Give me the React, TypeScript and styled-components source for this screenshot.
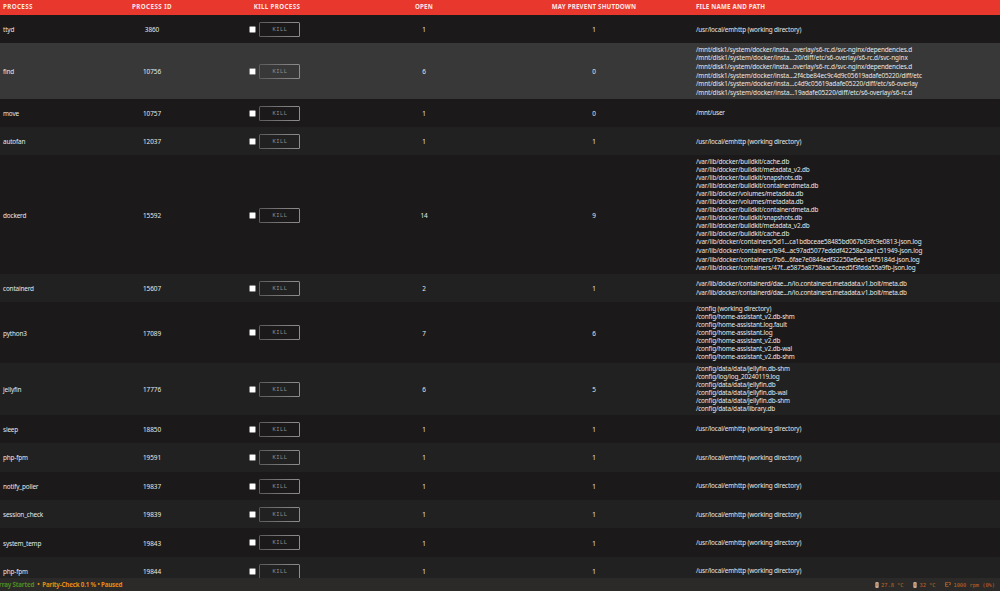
import React from "react";
import styled, { createGlobalStyle } from "styled-components";

const Global = createGlobalStyle`
  html, body { margin: 0; padding: 0; background: #1b1919; }
  body { overflow: hidden; }
`;

const Page = styled.div`
  width: 1000px;
  height: 591px;
  display: flex;
  flex-direction: column;
  overflow: hidden;
  background: #1b1919;
  color: #e8e8e8;
  font-family: "Noto Sans", sans-serif;
  font-size: 6.4px;
  letter-spacing: -0.16px;
`;

const columns = "103px 92px 158px 136px 204px 1fr";

const HeaderRow = styled.div`
  flex: none;
  box-sizing: border-box;
  height: 15px;
  display: grid;
  grid-template-columns: ${columns};
  align-items: center;
  padding: 0 3px 1px;
  background: #e8382d;
  color: #fde6e3;
  font-size: 6.2px;
  font-weight: 700;
  line-height: 8px;
  white-space: nowrap;
`;

const HeaderCell = styled.div<{ $center?: boolean; $spacing: number }>`
  text-align: ${(p) => (p.$center ? "center" : "left")};
  letter-spacing: ${(p) => p.$spacing}px;
`;

const Table = styled.div`
  flex: 1;
  min-height: 0;
  overflow: hidden;
`;

const Row = styled.div<{ $height: number; $bg: string }>`
  height: ${(p) => p.$height}px;
  display: grid;
  grid-template-columns: ${columns};
  align-items: center;
  padding: 0 3px;
  box-sizing: border-box;
  background: ${(p) => p.$bg};
  white-space: nowrap;
`;

const Cell = styled.div`
  padding-top: 1px;
`;

const NumberCell = styled(Cell)`
  text-align: center;
  letter-spacing: -0.06px;
`;

const KillCell = styled.div`
  display: flex;
  align-items: center;
  gap: 3px;
  padding: 0.6px 0 0 51px;
`;

const Check = styled.span`
  width: 7px;
  height: 7px;
  background: #fff;
  border: 1px solid #8a8989;
  border-radius: 1.5px;
  box-sizing: border-box;
`;

const KillButton = styled.button`
  width: 41px;
  height: 15px;
  padding: 0 0 0 1px;
  border: 0;
  border-radius: 1.5px;
  background:
    linear-gradient(90deg, #5c5a5a, #8f8d8d) top / 100% 1px no-repeat,
    linear-gradient(90deg, #5c5a5a, #8f8d8d) bottom / 100% 1px no-repeat,
    linear-gradient(#5c5a5a, #5c5a5a) left / 1px 100% no-repeat,
    linear-gradient(#8f8d8d, #8f8d8d) right / 1px 100% no-repeat;
  color: #8f8d8d;
  font: 5.4px/13px "DejaVu Sans Mono", monospace;
  letter-spacing: 0.5px;
  text-align: center;
`;

const Path = styled.div<{ $tall: boolean; $spacing: number }>`
  line-height: ${(p) => (p.$tall ? 8.55 : 8.06)}px;
  letter-spacing: ${(p) => p.$spacing}px;
`;

const Footer = styled.footer`
  flex: none;
  box-sizing: border-box;
  height: 13px;
  display: flex;
  align-items: center;
  justify-content: space-between;
  padding: 0 5px 0 0;
  background: #2b2a29;
  white-space: nowrap;
`;

const Status = styled.div`
  display: flex;
  gap: 3px;
  margin-left: -5px;
  color: #e68a12;
  font-size: 6.2px;
  font-weight: 700;
  letter-spacing: -0.17px;
`;

const Started = styled.span`
  color: #4f8a22;
`;

const Sensors = styled.div`
  display: flex;
  gap: 10px;
  color: #c4641f;
  font: 5.4px/8px "DejaVu Sans Mono", monospace;
  letter-spacing: -0.05px;
`;

const Sensor = styled.span`
  display: flex;
  align-items: center;
  gap: 2px;
`;

const dir = "/usr/local/emhttp (working directory)";

type PathEntry = string | [text: string, spacing: number];

type Process = {
  name: string;
  pid: number;
  open: number;
  prevent: number;
  height: number;
  paths: PathEntry[];
  hover?: boolean;
};

const processes: Process[] = [
  { name: "ttyd", pid: 3860, open: 1, prevent: 1, height: 28.4, paths: [dir] },
  {
    name: "find", pid: 10756, open: 6, prevent: 0, height: 55.3, hover: true,
    paths: [
      ["/mnt/disk1/system/docker/insta...overlay/s6-rc.d/svc-nginx/dependencies.d", -0.135],
      ["/mnt/disk1/system/docker/insta...20/diff/etc/s6-overlay/s6-rc.d/svc-nginx", -0.09],
      ["/mnt/disk1/system/docker/insta...overlay/s6-rc.d/svc-nginx/dependencies.d", -0.135],
      ["/mnt/disk1/system/docker/insta...2f4cbe84ec9c4d9c05619adafe05220/diff/etc", -0.105],
      ["/mnt/disk1/system/docker/insta...c4d9c05619adafe05220/diff/etc/s6-overlay", -0.095],
      ["/mnt/disk1/system/docker/insta...19adafe05220/diff/etc/s6-overlay/s6-rc.d", -0.09],
    ],
  },
  { name: "move", pid: 10757, open: 1, prevent: 0, height: 28.4, paths: ["/mnt/user"] },
  { name: "autofan", pid: 12037, open: 1, prevent: 1, height: 28.4, paths: [dir] },
  {
    name: "dockerd", pid: 15592, open: 14, prevent: 9, height: 118.6,
    paths: [
      "/var/lib/docker/buildkit/cache.db",
      "/var/lib/docker/buildkit/metadata_v2.db",
      "/var/lib/docker/buildkit/snapshots.db",
      "/var/lib/docker/buildkit/containerdmeta.db",
      "/var/lib/docker/volumes/metadata.db",
      "/var/lib/docker/volumes/metadata.db",
      "/var/lib/docker/buildkit/containerdmeta.db",
      "/var/lib/docker/buildkit/snapshots.db",
      "/var/lib/docker/buildkit/metadata_v2.db",
      "/var/lib/docker/buildkit/cache.db",
      ["/var/lib/docker/containers/5d1...ca1bdbceae58485bd067b03fc9e0813-json.log", -0.12],
      ["/var/lib/docker/containers/b94...ac97ad5077edddf42258e2ae1c51949-json.log", -0.11],
      ["/var/lib/docker/containers/7b6...6fae7e0844edf32250e6ee1d4f5184d-json.log", -0.12],
      ["/var/lib/docker/containers/47f...e5875a8758aac5ceed5f3fdda55a9fb-json.log", -0.135],
    ],
  },
  {
    name: "containerd", pid: 15607, open: 2, prevent: 1, height: 28.4,
    paths: [
      ["/var/lib/docker/containerd/dae...n/io.containerd.metadata.v1.bolt/meta.db", -0.18],
      ["/var/lib/docker/containerd/dae...n/io.containerd.metadata.v1.bolt/meta.db", -0.18],
    ],
  },
  {
    name: "python3", pid: 17089, open: 7, prevent: 6, height: 60.2,
    paths: [
      "/config (working directory)",
      "/config/home-assistant_v2.db-shm",
      "/config/home-assistant.log.fault",
      "/config/home-assistant.log",
      "/config/home-assistant_v2.db",
      "/config/home-assistant_v2.db-wal",
      "/config/home-assistant_v2.db-shm",
    ],
  },
  {
    name: "jellyfin", pid: 17776, open: 6, prevent: 5, height: 52.2,
    paths: [
      "/config/data/data/jellyfin.db-shm",
      "/config/log/log_20240119.log",
      "/config/data/data/jellyfin.db",
      "/config/data/data/jellyfin.db-wal",
      "/config/data/data/jellyfin.db-shm",
      "/config/data/data/library.db",
    ],
  },
  { name: "sleep", pid: 18850, open: 1, prevent: 1, height: 28.4, paths: [dir] },
  { name: "php-fpm", pid: 19591, open: 1, prevent: 1, height: 28.4, paths: [dir] },
  { name: "notify_poller", pid: 19837, open: 1, prevent: 1, height: 28.4, paths: [dir] },
  { name: "session_check", pid: 19839, open: 1, prevent: 1, height: 28.4, paths: [dir] },
  { name: "system_temp", pid: 19843, open: 1, prevent: 1, height: 28.4, paths: [dir] },
  { name: "php-fpm", pid: 19844, open: 1, prevent: 1, height: 28.4, paths: [dir] },
];

const Thermometer = () => (
  <svg width="4" height="6" viewBox="0 0 4 6">
    <rect x="0.3" y="0" width="3.4" height="6" rx="1" fill="#c9a893" />
    <path d="M2 1.5v2.5" stroke="#b55f22" strokeWidth="0.8" />
  </svg>
);

const Fan = () => (
  <svg width="6" height="5" viewBox="0 0 6 5" fill="none" stroke="#c4641f" strokeWidth="0.8">
    <path d="M3 .6H.5v3.8h3M.5 2.4h2M3.4 .6h2v2H4" />
  </svg>
);

export default function App() {
  return (
    <Page>
      <Global />
      <HeaderRow>
        <HeaderCell $spacing={0.4}>PROCESS</HeaderCell>
        <HeaderCell $center $spacing={0.44}>PROCESS ID</HeaderCell>
        <HeaderCell $center $spacing={0.37}>KILL PROCESS</HeaderCell>
        <HeaderCell $center $spacing={0.25}>OPEN</HeaderCell>
        <HeaderCell $center $spacing={0.17}>MAY PREVENT SHUTDOWN</HeaderCell>
        <HeaderCell $spacing={0.2}>FILE NAME AND PATH</HeaderCell>
      </HeaderRow>
      <Table>
        {processes.map((p, i) => (
          <Row key={p.pid} $height={p.height} $bg={p.hover ? "#383838" : i % 2 ? "#212121" : "#1b1919"}>
            <Cell>{p.name}</Cell>
            <NumberCell>{p.pid}</NumberCell>
            <KillCell>
              <Check />
              <KillButton>KILL</KillButton>
            </KillCell>
            <NumberCell>{p.open}</NumberCell>
            <NumberCell>{p.prevent}</NumberCell>
            <Cell>
              {p.paths.map((entry, n) => {
                const [text, spacing] = typeof entry === "string" ? [entry, -0.16] : entry;
                return (
                  <Path key={n} $tall={text.includes("...")} $spacing={spacing}>{text}</Path>
                );
              })}
            </Cell>
          </Row>
        ))}
      </Table>
      <Footer>
        <Status>
          <Started>Array Started</Started>
          <span>•</span>
          <span>Parity-Check 0.1 % • Paused</span>
        </Status>
        <Sensors>
          <Sensor><Thermometer />27.8 °C</Sensor>
          <Sensor><Thermometer />32 °C</Sensor>
          <Sensor><Fan />1000 rpm (0%)</Sensor>
        </Sensors>
      </Footer>
    </Page>
  );
}
